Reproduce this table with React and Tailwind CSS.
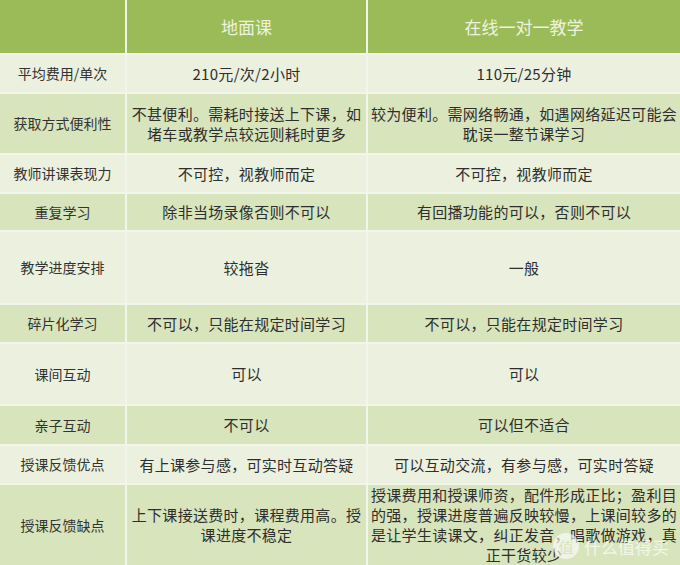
import React from "react";

const rows = [
  { h: "h-[37px]", label: "平均费用/单次", a: ["210元/次/2小时"], b: ["110元/25分钟"], dark: false },
  { h: "h-[59px]", label: "获取方式便利性", a: ["不甚便利。需耗时接送上下课，如", "堵车或教学点较远则耗时更多"], b: ["较为便利。需网络畅通，如遇网络延迟可能会", "耽误一整节课学习"], dark: true },
  { h: "h-[37px]", label: "教师讲课表现力", a: ["不可控，视教师而定"], b: ["不可控，视教师而定"], dark: false },
  { h: "h-[36px]", label: "重复学习", a: ["除非当场录像否则不可以"], b: ["有回播功能的可以，否则不可以"], dark: true },
  { h: "h-[71px]", label: "教学进度安排", a: ["较拖沓"], b: ["一般"], dark: false },
  { h: "h-[37px]", label: "碎片化学习", a: ["不可以，只能在规定时间学习"], b: ["不可以，只能在规定时间学习"], dark: true },
  { h: "h-[60px]", label: "课间互动", a: ["可以"], b: ["可以"], dark: false },
  { h: "h-[38px]", label: "亲子互动", a: ["不可以"], b: ["可以但不适合"], dark: true },
  { h: "h-[37px]", label: "授课反馈优点", a: ["有上课参与感，可实时互动答疑"], b: ["可以互动交流，有参与感，可实时答疑"], dark: false },
  { h: "h-[80px]", label: "授课反馈缺点", a: ["上下课接送费时，课程费用高。授", "课进度不稳定"], b: ["授课费用和授课师资，配件形成正比；盈利目", "的强，授课进度普遍反映较慢，上课间较多的", "是让学生读课文，纠正发音，唱歌做游戏，真", "正干货较少"], dark: true },
];

function Lines({ lines }) {
  return (
    <div className="text-center leading-[20px]">
      {lines.map((l, i) => (
        <div key={i} className="whitespace-nowrap">{l}</div>
      ))}
    </div>
  );
}

export default function App() {
  const font = { fontFamily: '"Noto Sans CJK SC", "Noto Sans", sans-serif' };
  return (
    <div className="relative w-[680px] h-[565px] overflow-hidden bg-[#f2f6ea]" style={font}>
      <div className="grid grid-cols-[125px_239px_312px] gap-[2px]">
        <div className="h-[53px] bg-[#9bbb59]" />
        <div className="h-[53px] bg-[#9bbb59] flex items-center justify-center text-[17px] text-[#eef3de]">地面课</div>
        <div className="h-[53px] bg-[#9bbb59] flex items-center justify-center text-[17px] text-[#eef3de]">在线一对一教学</div>
        {rows.map((r, i) => {
          const bg = r.dark ? "bg-[#d8e4bc]" : "bg-[#ebf1de]";
          return (
            <React.Fragment key={i}>
              <div className={`${r.h} ${bg} flex items-center justify-center text-[14px] text-[#333333]`}>{r.label}</div>
              <div className={`${r.h} ${bg} flex items-center justify-center text-[15px] tracking-[0.3px] text-[#2e2e2e]`}>
                <Lines lines={r.a} />
              </div>
              <div className={`${r.h} ${bg} flex items-center justify-center text-[15px] tracking-[0.3px] text-[#2e2e2e]`}>
                <Lines lines={r.b} />
              </div>
            </React.Fragment>
          );
        })}
      </div>
      <div className="absolute left-[553px] top-[533px] flex items-center gap-[5px] leading-none whitespace-nowrap">
        <div className="w-[26px] h-[26px] shrink-0 rounded-full bg-white/60 flex items-center justify-center text-[15px] text-[#d8e4bc]">值</div>
        <div className="text-[17px] leading-none whitespace-nowrap text-white/70">什么值得买</div>
      </div>
    </div>
  );
}
